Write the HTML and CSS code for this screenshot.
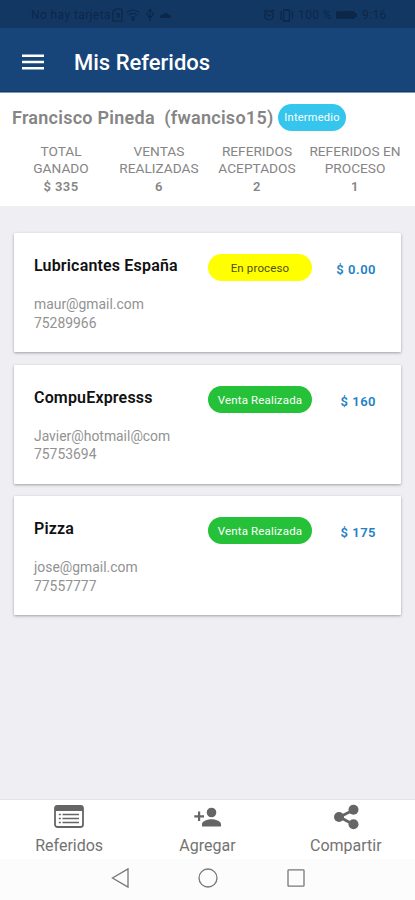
FILE: index.html
```html
<!DOCTYPE html>
<html lang="es">
<head>
<meta charset="utf-8">
<meta name="viewport" content="width=device-width, initial-scale=1">
<title>Mis Referidos</title>
<link rel="stylesheet" href="styles.css">
</head>
<body>
<div class="app">
  <div class="status">
    <span class="carrier">No hay tarjeta</span>
    <svg class="status-left" width="62" height="14" viewBox="0 0 62 14" fill="none" stroke="currentColor" stroke-width="1.2">
      <path d="M2 3.500 4.500 1H11v12H2zM5 5l3 3M8 5v4H5"/>
      <path d="M16 4.500q6-5 12 0M18 7q4-3.500 8 0M20 9.500q2-1.500 4 0"/><circle cx="22" cy="11.500" r=".8"/>
      <path d="M39 1.500V13M36 4v3l3 3 3-3V4M37.500 3 39 1.500 40.500 3"/>
      <path d="M49.500 9.500h10q0-2.500-2.500-2.500-2-3.500-4.500 0-3 0-3 2.500z" fill="currentColor"/>
    </svg>
    <svg class="status-right" width="32" height="14" viewBox="0 0 32 14" fill="none" stroke="currentColor" stroke-width="1.300">
      <circle cx="6" cy="7.500" r="4.300"/><path d="M1 3.500 3.500 1.500M11 3.500 8.500 1.500M4 6l2 2 2-1.500"/>
      <path d="M18 3v9M20.500 2h6v11h-6zM29.500 3.500v7"/>
    </svg>
    <span>100 %</span>
    <svg class="battery" width="23" height="10" viewBox="0 0 23 10"><rect x="1" y="1" width="19" height="8" rx="1.500" fill="currentColor"/><path d="M20 3h2v4h-2z" fill="currentColor"/></svg>
    <span>9:16</span>
  </div>
  <header class="bar">
    <svg width="22" height="16" viewBox="0 0 22 16" fill="#fff"><path d="M0 .5h22v2.600H0zM0 6.700h22v2.600H0zM0 12.900h22v2.600H0z"/></svg>
    <h1>Mis Referidos</h1>
  </header>
  <section class="profile">
    <div class="who"><h2>Francisco Pineda&nbsp; (fwanciso15)</h2><span class="level">Intermedio</span></div>
    <div class="stats">
      <div>TOTAL<br>GANADO<b>$ 335</b></div>
      <div>VENTAS<br>REALIZADAS<b>6</b></div>
      <div>REFERIDOS<br>ACEPTADOS<b>2</b></div>
      <div>REFERIDOS EN<br>PROCESO<b>1</b></div>
    </div>
  </section>
  <main class="list">
    <article class="card">
      <div class="info"><h3>Lubricantes España</h3><p>maur@gmail.com<br>75289966</p></div>
      <span class="tag pending">En proceso</span><span class="amount">$ 0.00</span>
    </article>
    <article class="card">
      <div class="info"><h3>CompuExpresss</h3><p>Javier@hotmail@com<br>75753694</p></div>
      <span class="tag">Venta Realizada</span><span class="amount">$ 160</span>
    </article>
    <article class="card">
      <div class="info"><h3>Pizza</h3><p>jose@gmail.com<br>77557777</p></div>
      <span class="tag">Venta Realizada</span><span class="amount">$ 175</span>
    </article>
  </main>
  <nav class="tabs">
    <a><svg width="30" height="26" viewBox="0 0 30 26"><rect x="1" y="2" width="28" height="21" rx="2.500" fill="none" stroke="currentColor" stroke-width="1.800"/><path d="M1 3.500Q1 1.500 3.500 1.500h23q2.500 0 2.500 2V7H1zM4.800 9.700h2v1.600h-2zM8.500 9.700h16.500v1.600H8.500zM4.800 13.700h2v1.600h-2zM8.500 13.700h16.500v1.600H8.500zM4.800 17.700h2v1.600h-2zM8.500 17.700h16.500v1.600H8.500z" fill="currentColor"/></svg>Referidos</a>
    <a><svg width="30" height="26" viewBox="0 0 30 26" fill="currentColor"><circle cx="19.500" cy="8.500" r="4.800"/><path d="M10 22.500v-2.300c0-3.500 6-5 9.500-5s9.500 1.500 9.500 5v2.300zM6 7.500h2.200v3.700H12v2.200H8.200v3.700H6v-3.700H2.300v-2.200H6z"/></svg>Agregar</a>
    <a><svg width="30" height="26" viewBox="0 0 30 26"><path d="M22.500 6 8.500 13l14 7.500" fill="none" stroke="currentColor" stroke-width="2.800"/><g fill="currentColor"><circle cx="22.500" cy="5.700" r="5"/><circle cx="8" cy="13" r="5"/><circle cx="22.500" cy="20.300" r="5"/></g></svg>Compartir</a>
  </nav>
  <div class="system">
    <svg width="20" height="22" viewBox="0 0 20 22"><path d="M18 2v18L2.500 11z"/></svg>
    <svg width="22" height="22" viewBox="0 0 22 22"><circle cx="11" cy="11" r="9"/></svg>
    <svg width="20" height="22" viewBox="0 0 20 22"><rect x="2" y="2.800" width="16" height="16.400" rx=".8"/></svg>
  </div>
</div>
</body>
</html>
```
FILE: styles.css
```css
* { box-sizing: border-box; }
body { margin: 0; font-family: Roboto, sans-serif; background: #efeef3; }
h1, h2, h3, p { margin: 0; }
svg { display: block; flex: none; }
.app { width: 415px; height: 900px; display: flex; flex-direction: column; }
.status { height: 28px; flex: none; background: #133763; color: #0c2747; display: flex; align-items: center; padding: 1px 0 0 31px; font-size: 12px; letter-spacing: .4px; white-space: nowrap; }
.carrier { width: 80px; }
.status-right { margin-left: 90px; margin-right: 3px; }
.battery { margin: 0 4px 0 3px; }
.bar { height: 65px; flex: none; background: #174579; border-bottom: 1px solid #7f9ab6; box-shadow: inset 0 -1px #103968; display: flex; align-items: center; padding: 4px 0 0 22px; gap: 30px; }
.bar h1 { font-size: 22px; font-weight: 500; color: #fff; letter-spacing: 0; line-height: 26px; padding-top: 1px; }
.profile { height: 113px; flex: none; background: #fff; padding-top: 11px; color: #858585; }
.who { height: 27px; display: flex; align-items: center; padding-left: 12px; white-space: nowrap; }
.who h2 { font-size: 18px; font-weight: 600; letter-spacing: .26px; width: 266px; }
.level { width: 68px; height: 27px; border-radius: 14px; background: #36c5ec; color: #fff; font-size: 11px; line-height: 28px; text-align: center; letter-spacing: .25px; }
.stats { display: grid; grid-template-columns: repeat(4, 98px); margin: 12px 0 0 12px; font-size: 13.700px; line-height: 16.500px; text-align: center; white-space: nowrap; }
.stats b { display: block; font-size: 13px; font-weight: 600; line-height: 21px; letter-spacing: .4px; }
.list { flex: 1; padding: 27px 14px 0; display: flex; flex-direction: column; gap: 12.500px; }
.card { height: 119px; flex: none; background: #fff; border-radius: 1px; box-shadow: 0 1px 3px #0005; display: flex; padding: 21px 25px 0 20px; }
.info { width: 174px; white-space: nowrap; }
.info h3 { font-size: 16px; font-weight: 600; line-height: 24px; color: #111; letter-spacing: .17px; }
.info p { margin-top: 17px; font-size: 13.900px; line-height: 18.500px; color: #929292; }
.tag { width: 104px; height: 27px; border-radius: 14px; background: #25c138; color: #fff; font-size: 11.500px; letter-spacing: .15px; line-height: 28px; text-align: center; white-space: nowrap; }
.pending { background: #ff0; color: #4e4e16; }
.amount { margin-left: auto; font-size: 13px; font-weight: 600; line-height: 32px; color: #2480c4; letter-spacing: .5px; }
.tabs { height: 60px; flex: none; border-top: 1px solid #e4e3e6; background: #fff; display: grid; grid-template-columns: repeat(3, 1fr); color: #656565; }
.tabs a { display: flex; flex-direction: column; align-items: center; padding-top: 4px; font-size: 16px; line-height: 31px; color: #737373; }
.tabs svg { color: #656565; }
.system { height: 41px; flex: none; background: #fcfcfc; display: flex; justify-content: center; gap: 67px; padding-top: 8px; }
.system svg { fill: none; stroke: #777; stroke-width: 1.3; }
```
